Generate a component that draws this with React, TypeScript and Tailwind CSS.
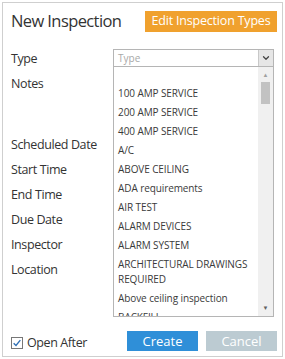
import { ChevronDown } from "lucide-react";

const types = [
  "",
  "100 AMP SERVICE",
  "200 AMP SERVICE",
  "400 AMP SERVICE",
  "A/C",
  "ABOVE CEILING",
  "ADA requirements",
  "AIR TEST",
  "ALARM DEVICES",
  "ALARM SYSTEM",
  "ARCHITECTURAL DRAWINGS REQUIRED",
  "Above ceiling inspection",
  "BACKFILL",
];

const labels = [
  { text: "Type", mt: "mt-0" },
  { text: "Notes", mt: "mt-[7px]" },
  { text: "Scheduled Date", mt: "mt-[43px]" },
  { text: "Start Time", mt: "mt-[7px]" },
  { text: "End Time", mt: "mt-[7px]" },
  { text: "Due Date", mt: "mt-[7px]" },
  { text: "Inspector", mt: "mt-[7px]" },
  { text: "Location", mt: "mt-[7px]" },
];

export default function App() {
  return (
    <div
      className="w-[285px] h-[359px] bg-white p-[2px] text-[#333]"
      style={{ fontFamily: '"Open Sans", "Noto Sans", sans-serif' }}
    >
      <div className="h-full border border-[#cfcfcf] flex flex-col px-[8px]">
        {/* header */}
        <div className="flex items-center justify-between mt-[7px]">
          <h1 className="text-[16.5px] leading-[22px] tracking-[-0.6px]">New Inspection</h1>
          <button className="h-[21px] w-[132px] bg-[#f0a12e] text-white text-[12.5px] tracking-[-0.2px] leading-none mr-[-3px]">
            Edit Inspection Types
          </button>
        </div>

        <div className="flex mt-[17px]">
          {/* labels */}
          <div className="w-[104px] flex flex-col text-[12.5px] tracking-[-0.4px] leading-[18px] pt-[1px]">
            {labels.map((l) => (
              <div key={l.text} className={l.mt}>
                {l.text}
              </div>
            ))}
          </div>

          {/* select + open list */}
          <div className="w-[164px] flex flex-col">
            <div className="h-[18px] border border-[#b5b5b5] flex items-stretch">
              <span className="flex-1 text-[10px] leading-[16px] pl-[4px] text-[#a8a8a8]">Type</span>
              <span className="w-[15px] bg-[#e6e6e6] border-l border-[#c8c8c8] flex items-center justify-center">
                <ChevronDown className="w-[10px] h-[10px] text-[#444]" strokeWidth={3} />
              </span>
            </div>
            <div className="h-[250px] border border-t-0 border-[#b5b5b5] flex overflow-hidden">
              <ul className="flex-1 text-[10px] tracking-[-0.1px] leading-[15px] text-[#3a3a3a] pl-[4px] pt-[2px] overflow-hidden">
                {types.map((t, i) => (
                  <li key={i} className="min-h-[15px] py-[2px] pr-[2px]">
                    {t}
                  </li>
                ))}
              </ul>
              <div className="w-[15px] bg-[#f0f0f0] flex flex-col items-center">
                <span className="text-[6px] leading-none text-[#a0a0a0] mt-[5px]">▲</span>
                <div className="w-[9px] h-[22px] bg-[#c2c2c2] mt-[4px]" />
                <div className="flex-1" />
                <span className="text-[6px] leading-none text-[#606060] mb-[5px]">▼</span>
              </div>
            </div>
          </div>
        </div>

        {/* footer */}
        <div className="flex items-center mt-auto mb-[4px]">
          <div className="flex items-center gap-[4px] mt-[2px]">
            <span className="w-[12px] h-[12px] border border-[#777] bg-white flex items-center justify-center">
              <svg viewBox="0 0 12 12" className="w-[10px] h-[10px]">
                <path d="M2 6.2 L4.8 9 L10 2.6" fill="none" stroke="#2f6fb5" strokeWidth="1.6" />
              </svg>
            </span>
            <span className="text-[12.5px] tracking-[-0.4px] leading-[18px]">Open After</span>
          </div>
          <button className="ml-auto w-[71px] h-[20px] bg-[#2f8fd8] text-white text-[13px] leading-none mb-[1px]">
            Create
          </button>
          <button className="ml-[8px] w-[71px] h-[20px] bg-[#bccbd2] text-white text-[13px] leading-none mr-[-3px] mb-[1px]">
            Cancel
          </button>
        </div>
      </div>
    </div>
  );
}
